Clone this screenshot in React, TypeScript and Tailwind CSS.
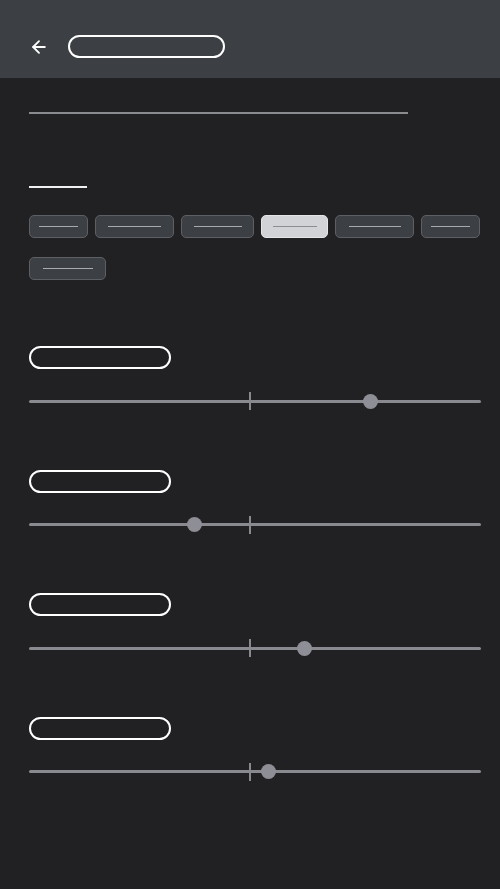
import { ArrowLeft } from "lucide-react";

const chips = [
  { w: 59, line: 39 },
  { w: 79, line: 53 },
  { w: 73, line: 48 },
  { w: 67, line: 44, active: true },
  { w: 79, line: 52 },
  { w: 59, line: 39 },
  { w: 77, line: 50 },
];

const sliders = [370, 194, 304, 268];

function Chip({ w, line, active }: { w: number; line: number; active?: boolean }) {
  return (
    <div
      className={`h-[23px] rounded-[5px] border flex items-center justify-center ${
        active ? "bg-[#d2d3d6] border-[#e4e5e8]" : "bg-[#3c3f43] border-[#5c5f64]"
      }`}
      style={{ width: w }}
    >
      <div className={`h-px ${active ? "bg-[#8c8d90]" : "bg-[#a9aaad]"}`} style={{ width: line }} />
    </div>
  );
}

function Slider({ thumb }: { thumb: number }) {
  // thumb is an absolute x on the page, track starts at x=29
  return (
    <div className="mt-[23px] relative h-[18px] w-[452px]">
      <div className="absolute left-0 right-0 top-[7.5px] h-[3px] rounded-full bg-[#898a90]" />
      <div className="absolute left-[220px] top-0 h-[18px] w-[2px] bg-[#898a90]" />
      <div
        className="absolute top-[1.5px] w-[15px] h-[15px] rounded-full bg-[#8e8f96]"
        style={{ left: thumb - 29 - 7.5 }}
      />
    </div>
  );
}

export default function App() {
  return (
    <div className="w-[500px] h-[889px] bg-[#212123] font-['Roboto',sans-serif] overflow-hidden">
      <header className="h-[78px] bg-[#3c3f43] flex items-start pt-[35px] pl-[29px] gap-[19px]">
        <ArrowLeft className="mt-[1.5px] w-[20px] h-[20px] text-white" strokeWidth={2.2} />
        <div className="w-[157px] h-[23px] rounded-full border-2 border-white" />
      </header>

      <div className="px-[29px]">
        <div className="mt-[34px] h-[2px] w-[379px] bg-[#8a8b8f]" />
        <div className="mt-[72px] h-[2px] w-[58px] bg-[#f0f0f0]" />

        <div className="mt-[27px] flex flex-wrap gap-x-[7px] gap-y-[19px] w-[460px]">
          {chips.map((c, i) => (
            <Chip key={i} w={c.w} line={c.line} active={c.active} />
          ))}
        </div>

        <div className="mt-[66px] flex flex-col gap-[59.5px]">
          {sliders.map((t, i) => (
            <div key={i}>
              <div className="w-[142px] h-[23px] rounded-full border-2 border-white" />
              <Slider thumb={t} />
            </div>
          ))}
        </div>
      </div>
    </div>
  );
}
